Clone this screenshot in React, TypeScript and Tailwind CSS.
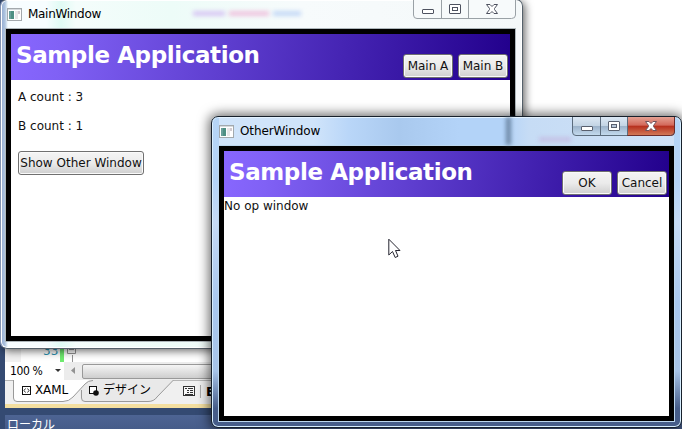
import type { ReactNode } from "react";

const uiFont = "font-['DejaVu_Sans','Noto_Sans_CJK_JP',sans-serif]";

function AppIcon() {
  return (
    <svg width="15" height="13" viewBox="0 0 15 13" className="shrink-0">
      <rect x="0.5" y="0.5" width="14" height="12" fill="#fff" stroke="#a3a9ad" />
      <rect x="1" y="1" width="13" height="1" fill="#d5dade" />
      <rect x="2" y="3" width="5" height="8" fill="#4e8f83" />
      <rect x="2" y="3" width="2" height="8" fill="#6a9f9b" />
      <rect x="8" y="3" width="3" height="8" fill="#e8e6e8" />
      <rect x="11" y="3" width="2" height="3" fill="#d2cbd0" />
    </svg>
  );
}

function CaptionButtons({ active }: { active: boolean }) {
  const line = active ? "#5c6c7d" : "#9aa1a6";
  const ink = active ? "#59606e" : "#4e5260";
  return (
    <svg width="104" height="20" viewBox="0 0 104 20" className="shrink-0">
      <defs>
        <linearGradient id="glass" x1="0" y1="0" x2="0" y2="1">
          <stop offset="0" stopColor="#dce8f4" />
          <stop offset=".48" stopColor="#c3d4e4" />
          <stop offset=".5" stopColor="#9db3ca" />
          <stop offset="1" stopColor="#c5dcf0" />
        </linearGradient>
        <linearGradient id="close" x1="0" y1="0" x2="0" y2="1">
          <stop offset="0" stopColor="#e5a193" />
          <stop offset=".46" stopColor="#d3685a" />
          <stop offset=".5" stopColor="#b62e1c" />
          <stop offset="1" stopColor="#d27857" />
        </linearGradient>
      </defs>
      <path d="M.5 0V15Q.5 18.500 4 18.500H98.500Q102.500 18.500 102.500 15V0" fill={active ? "url(#glass)" : "#f7fafb"} stroke={line} />
      {active && <path d="M56 0H102V15Q102 18 98 18H56Z" fill="url(#close)" />}
      {active && <path d="M55.500 0V18.500H98.500Q102.500 18.500 102.500 15V0" fill="none" stroke="#6d2c2a" />}
      <path d="M28.500 0V18M55.500 0V18" stroke={line} />
      <rect x="9.500" y="9.500" width="11" height="4" rx=".5" fill="#fff" stroke={ink} />
      <rect x="36.500" y="4.500" width="11" height="9" rx=".5" fill="#fff" stroke={ink} />
      <rect x="39.500" y="7.500" width="5" height="3" fill={active ? "#b9c9db" : "#fff"} stroke={ink} />
      <path
        d="M73.500 4.500H77L79 6.500L81 4.500H84.500L81.500 8.500V9.500L84.500 13.500H81L79 11.500L77 13.500H73.500L76.500 9.500V8.500Z"
        fill="#fff"
        stroke={active ? "#71535b" : ink}
      />
    </svg>
  );
}

function Button({ children, className }: { children: ReactNode; className: string }) {
  return (
    <button
      className={`h-6 shrink-0 whitespace-nowrap rounded-[3px] border border-[#707070] bg-linear-to-b from-[#f4f4f4] from-0% via-[#ebebeb] via-50% to-[#cfcfcf] p-0 text-[12px] leading-[20px] text-[#111] shadow-[inset_0_0_0_1px_#fafafa] ${className}`}
    >
      {children}
    </button>
  );
}

function Header({ children }: { children: ReactNode }) {
  return (
    <header className="flex h-[46px] shrink-0 bg-[linear-gradient(97deg,#8867ff_0%,#8061f5_10%,#22008c_100%)] pl-[5px] pr-[2px]">
      <h1 className="mt-[5px] whitespace-nowrap text-[23px] font-bold leading-[32px] tracking-[-0.4px] text-white">
        Sample Application
      </h1>
      <div className="ml-auto flex items-end gap-[5px] pb-[2px]">{children}</div>
    </header>
  );
}

function CodeEditor() {
  return (
    <div className="flex h-full flex-col bg-[#344a72] pl-[5px]">
      <div className="-ml-[5px] h-[349px] shrink-0 bg-[linear-gradient(90deg,#344a72_5px,#fff_5px)]" />
      <div className="flex h-[13px] shrink-0 bg-white text-[12px] leading-[12px] text-[#2b91af]">
        <div className="w-4 bg-[#f1f1f1]" />
        <div className="-mt-[4px] h-[14px] w-[39px] pl-[22px]">33</div>
        <div className="h-full w-1 bg-[#6fea6f]" />
        <svg width="16" height="13" className="shrink-0">
          <path d="M3.500 -4V4.500H11.500V-4M5 .5H10M8.500 6V13" fill="none" stroke="#929292" />
        </svg>
      </div>
      <div className="flex h-[18px] shrink-0 items-center bg-[#ececec] text-[12px] text-black">
        <div className="flex h-full w-[59px] items-center justify-between bg-white pl-[5px] pr-[3px]">
          <span className="whitespace-nowrap font-['DejaVu_Sans_Condensed','DejaVu_Sans',sans-serif] tracking-[-0.4px]">100 %</span>
          <svg width="6" height="4"><path d="M0 0H6L3 3Z" fill="#333" /></svg>
        </div>
        <svg width="18" height="16"><path d="M11 4V11L7 7.500Z" fill="#929292" /></svg>
        <div className="h-[15px] grow rounded-[2px] border border-[#999] bg-linear-to-b from-[#f5f5f5] to-[#cecece]" />
      </div>
      <div className="relative flex h-[24px] shrink-0 items-start bg-[#f0f0f0] pt-[1px] text-[12px] leading-[19px] text-black">
        <svg width="677" height="24" className="absolute inset-0">
          <path d="M0 .5H677" stroke="#b5b5b5" />
          <path d="M80 0L74 7L76 21.500H144Q149 21.500 152 17L168 0Z" fill="#e9e9e9" />
          <path d="M76.500 10V18Q76.500 21.500 80 21.500H143Q149 21.500 152 17L168 .5" fill="none" stroke="#999" />
          <path d="M8.500 0V18Q8.500 21.500 12 21.500H58Q64 21.500 68 17L80 4Q83 0 88 0Z" fill="#fff" />
          <path d="M8.500 0V18Q8.500 21.500 12 21.500H58Q64 21.500 68 17L80 4Q83 .5 88 .5" fill="none" stroke="#999" />
          <rect x="17.500" y="6.500" width="8" height="8" fill="white" stroke="#111" />
          <path d="M20.500 8.500L19 10.500L20.500 12.500M22.500 8.500L24 10.500L22.500 12.500" fill="none" stroke="#333" />
          <rect x="84.500" y="6.500" width="7" height="7" fill="white" stroke="#111" />
          <circle cx="91" cy="13" r="2.800" fill="#111" />
          <rect x="178.500" y="6.500" width="11" height="9" fill="#f8f8f8" stroke="#333" />
          <path d="M180 8.500H182M183 8.500H188M182 10.500H184M185 10.500H188M182 12.500H184M185 12.500H188M180 14.500H188" stroke="#333" />
          <path d="M195.500 5V18" stroke="#aaa" />
        </svg>
        <span className="relative ml-[30px] w-[68px] tracking-[-0.1px]">XAML</span>
        <span className="relative w-[103px] whitespace-nowrap">デザイン</span>
        <b className="relative text-[13px] leading-[22px]">E</b>
      </div>
      <div className="h-[4px] shrink-0 bg-[#f4dfa0] shadow-[0_-1px_#cfc8b5]" />
      <div className="h-[7px] shrink-0" />
      <div className="h-[14px] shrink-0 whitespace-nowrap bg-linear-to-b from-[#4d6493] to-[#465c89] pl-[2px] pt-[3px] text-[12px] leading-[15px] text-white">ローカル</div>
    </div>
  );
}

export default function App() {
  return (
    <div className={`relative h-[429px] w-[682px] overflow-hidden bg-white ${uiFont}`}>
      <CodeEditor />

      <section className="absolute left-0 top-[-1px] flex h-[350px] w-[523px] flex-col rounded-[7px] border border-[#55616b] border-l-[#8494b2] bg-[linear-gradient(90deg,#91a9d0_0,#afc5df_4px,#f7fdff_7px,#f7fdff_45px,#e0fbf4_60px,#f4fdfb_75px,#edfcf8_170px,#f7fbfc_300px,#f4f8f9_100%)] pb-[7px] pl-[5px] pr-[7px] shadow-[2px_2px_8px_#0009,inset_0_0_0_1px_#fff]">
        <div className="flex h-[29px] shrink-0 items-start text-[12px] text-black">
          <div className="mt-[7px] flex items-center gap-[6px] pl-[1px] leading-[14px]">
            <AppIcon />
            <span className="whitespace-nowrap tracking-[-0.3px]">MainWindow</span>
          </div>
          <div className="ml-[92px] mt-[11px] flex gap-1 blur-[2px]">
            <i className="h-[5px] w-8 bg-[#d8c8f3]" />
            <i className="h-[5px] w-10 bg-[#efc5df]" />
            <i className="h-[5px] w-7 bg-[#c5d9f6]" />
          </div>
          <div className="ml-auto mr-[-2px]"><CaptionButtons active={false} /></div>
        </div>
        <div className="flex min-h-0 grow flex-col border-[5px] border-black bg-white shadow-[0_0_0_1px_#aeb7bb]">
          <Header>
            <Button className="w-[50px]">Main A</Button>
            <Button className="w-[50px]">Main B</Button>
          </Header>
          <div className="flex flex-col items-start pl-[7px] pt-[9px] text-[12px] leading-[17px] text-[#111]">
            <p className="mb-3">A count : 3</p>
            <p className="mb-[16px]">B count : 1</p>
            <Button className="w-[126px]">Show Other Window</Button>
          </div>
        </div>
      </section>

      <section className="absolute left-[211px] top-[116px] flex h-[312px] w-[471px] flex-col rounded-[7px] border border-[#17202b] bg-[linear-gradient(180deg,#b6d5f6_0%,#b3d3f8_20%,#c5daf5_34%,#a9c8ef_60%,#a7c4e8_82%,#465d89_94%,#465d89_100%)] px-[7px] pb-[6px] shadow-[0_0_12px_2px_#0009,inset_0_0_0_1px_#d7eeff]">
        <div className="flex h-[29px] shrink-0 items-start bg-[linear-gradient(90deg,#d0e4fa_0,#d0e4fa_95px,#b9d6f8_130px,#a9c9ee_180px,#b3d3f8_240px,#b3d3f8_285px,#c6dcf5_310px,#cfe1f7_100%)] text-[12px] text-black shadow-[inset_0_1px_#e4f3ff]">
          <div className="mt-[7px] flex items-center gap-[6px] leading-[14px]">
            <AppIcon />
            <span className="whitespace-nowrap tracking-[-0.1px]">OtherWindow</span>
          </div>
          <div className="ml-[186px] h-[28px] w-[5px] bg-[#4d6681]/70 blur-[2px]" />
          <div className="ml-[28px] mt-[20px] h-[5px] w-8 bg-[#c3b7df]/70 blur-[2px]" />
          <div className="ml-auto mr-[-2px]"><CaptionButtons active /></div>
        </div>
        <div className="flex min-h-0 grow flex-col border-[5px] border-black bg-white shadow-[0_0_0_1px_#bcd7ee]">
          <Header>
            <Button className="w-[50px]">OK</Button>
            <Button className="w-[50px]">Cancel</Button>
          </Header>
          <p className="text-[12px] leading-[18px] text-[#111]">No op window</p>
        </div>
      </section>

      <svg width="14" height="22" viewBox="0 0 14 22" className="absolute left-[388px] top-[238px]">
        <path d="M.8 1.200V17L4.500 13.500L7.200 19.500L10 18.200L7.500 12.500H12Z" fill="white" stroke="#24242f" />
      </svg>
    </div>
  );
}
